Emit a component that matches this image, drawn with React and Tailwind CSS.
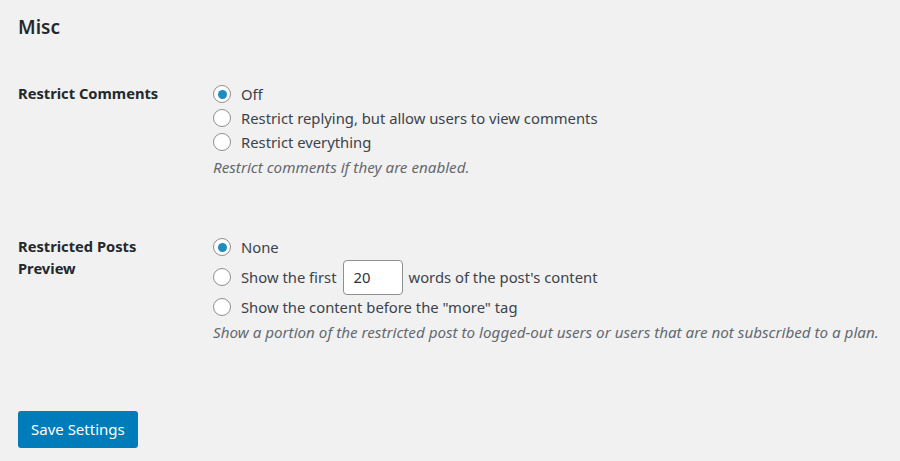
import React from "react";

const font = { fontFamily: '"Noto Sans", "Open Sans", sans-serif' };

function Radio({ checked }) {
  return (
    <span className="flex h-[18px] w-[18px] shrink-0 items-center justify-center rounded-full border border-[#8c8f94] bg-white">
      {checked && <span className="h-[9px] w-[9px] rounded-full bg-[#1e8cbe]" />}
    </span>
  );
}

function Option({ checked, children, tall }) {
  return (
    <div className={`flex items-center gap-[10px] ${tall ? "h-[36px]" : "h-[24px]"}`}>
      <Radio checked={checked} />
      <span className="flex items-center">{children}</span>
    </div>
  );
}

export default function App() {
  return (
    <div
      className="min-h-[461px] w-[900px] bg-[#f1f1f1] pl-[18px] pt-[14px] text-[14.8px] text-[#3c434a]"
      style={font}
    >
      <h2 className="text-[19px] font-semibold leading-[26px] text-[#23282d]">Misc</h2>

      <div className="mt-[42px] flex">
        <div className="w-[195px] shrink-0 text-[14.7px] font-bold leading-[22px] text-[#23282d]">
          Restrict Comments
        </div>
        <div className="flex flex-col">
          <Option checked>Off</Option>
          <Option>Restrict replying, but allow users to view comments</Option>
          <Option>Restrict everything</Option>
          <p className="mt-[1px] text-[15.2px] italic leading-[24px] text-[#646970]">
            Restrict comments if they are enabled.
          </p>
        </div>
      </div>

      <div className="mt-[56px] flex">
        <div className="w-[195px] shrink-0 text-[14.7px] font-bold leading-[22px] text-[#23282d]">
          Restricted Posts
          <br />
          Preview
        </div>
        <div className="flex flex-col">
          <Option checked>None</Option>
          <Option tall>
            Show the first
            <span className="mx-[6px] flex h-[35px] w-[60px] items-center rounded-[4px] border border-[#8c8f94] bg-white px-[10px] text-[#2c3338]">
              20
            </span>
            words of the post's content
          </Option>
          <Option>Show the content before the "more" tag</Option>
          <p className="mt-[1px] text-[15.2px] italic leading-[24px] text-[#646970]">
            Show a portion of the restricted post to logged-out users or users that are not subscribed to a plan.
          </p>
        </div>
      </div>

      <button className="mt-[67px] flex h-[37px] items-center rounded-[3px] bg-[#007cba] px-[13px] text-[15px] text-white">
        Save Settings
      </button>
    </div>
  );
}
